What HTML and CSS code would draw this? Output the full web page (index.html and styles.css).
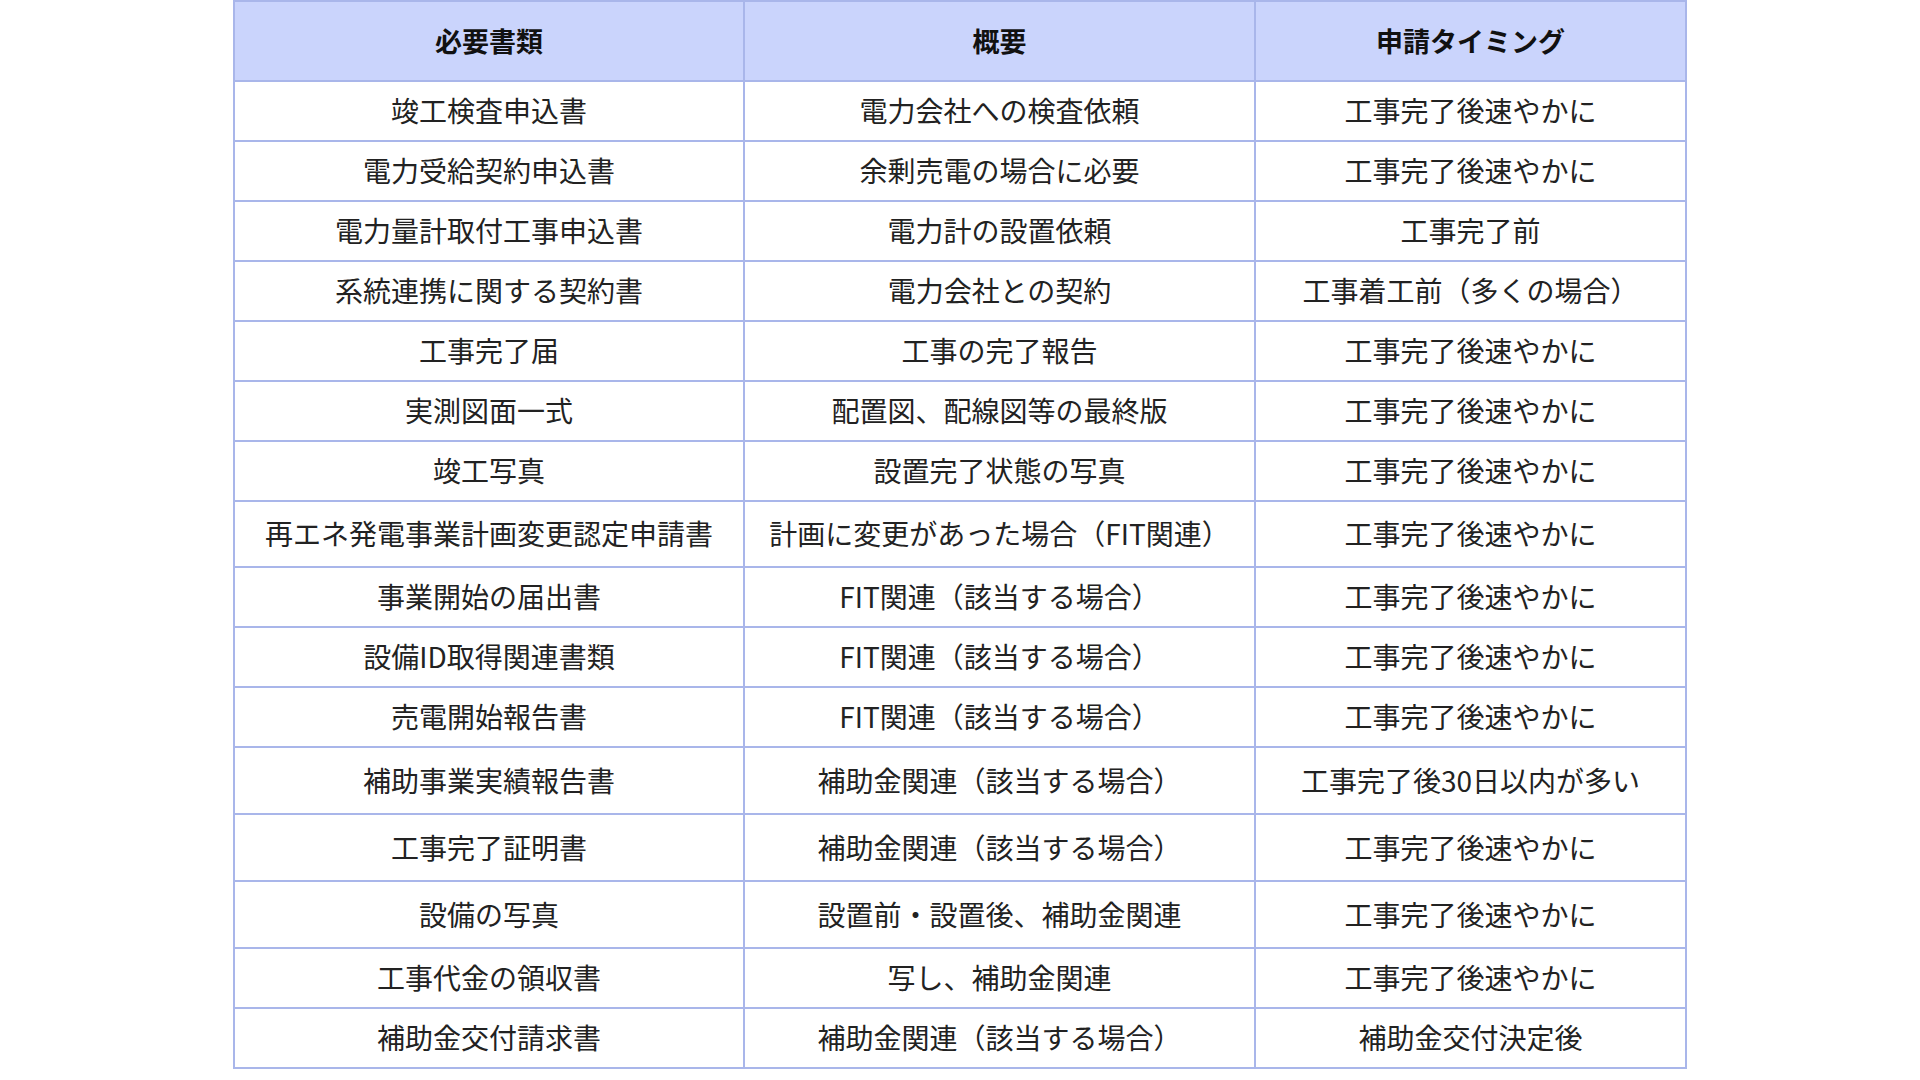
FILE: index.html
```html
<!DOCTYPE html>
<html lang="ja">
<head>
<meta charset="utf-8">
<title>必要書類一覧</title>
<link rel="stylesheet" href="styles.css">
</head>
<body>
<table class="docs">
  <colgroup>
    <col class="c1"><col class="c2"><col class="c3">
  </colgroup>
  <thead>
    <tr class="head"><th>必要書類</th><th>概要</th><th>申請タイミング</th></tr>
  </thead>
  <tbody>
    <tr><td>竣工検査申込書</td><td>電力会社への検査依頼</td><td>工事完了後速やかに</td></tr>
    <tr><td>電力受給契約申込書</td><td>余剰売電の場合に必要</td><td>工事完了後速やかに</td></tr>
    <tr><td>電力量計取付工事申込書</td><td>電力計の設置依頼</td><td>工事完了前</td></tr>
    <tr><td>系統連携に関する契約書</td><td>電力会社との契約</td><td>工事着工前（多くの場合）</td></tr>
    <tr><td>工事完了届</td><td>工事の完了報告</td><td>工事完了後速やかに</td></tr>
    <tr><td>実測図面一式</td><td>配置図、配線図等の最終版</td><td>工事完了後速やかに</td></tr>
    <tr><td>竣工写真</td><td>設置完了状態の写真</td><td>工事完了後速やかに</td></tr>
    <tr class="tall"><td>再エネ発電事業計画変更認定申請書</td><td>計画に変更があった場合（FIT関連）</td><td>工事完了後速やかに</td></tr>
    <tr><td>事業開始の届出書</td><td>FIT関連（該当する場合）</td><td>工事完了後速やかに</td></tr>
    <tr><td>設備ID取得関連書類</td><td>FIT関連（該当する場合）</td><td>工事完了後速やかに</td></tr>
    <tr><td>売電開始報告書</td><td>FIT関連（該当する場合）</td><td>工事完了後速やかに</td></tr>
    <tr class="taller"><td>補助事業実績報告書</td><td>補助金関連（該当する場合）</td><td>工事完了後30日以内が多い</td></tr>
    <tr class="taller"><td>工事完了証明書</td><td>補助金関連（該当する場合）</td><td>工事完了後速やかに</td></tr>
    <tr class="taller"><td>設備の写真</td><td>設置前・設置後、補助金関連</td><td>工事完了後速やかに</td></tr>
    <tr><td>工事代金の領収書</td><td>写し、補助金関連</td><td>工事完了後速やかに</td></tr>
    <tr><td>補助金交付請求書</td><td>補助金関連（該当する場合）</td><td>補助金交付決定後</td></tr>
  </tbody>
</table>
</body>
</html>
```

FILE: styles.css
```css
html, body {
  margin: 0;
  padding: 0;
  background: #ffffff;
}

body {
  font-family: "Noto Sans CJK JP", "Noto Sans", sans-serif;
  color: #222222;
}

.docs {
  margin: 0 auto;
  border-collapse: collapse;
  table-layout: fixed;
  width: 1452px;
}

.c1 { width: 510px; }
.c2 { width: 511px; }
.c3 { width: 431px; }

.docs th,
.docs td {
  border: 2px solid #a9b6ea;
  padding: 0 0 2px;
  text-align: center;
  vertical-align: middle;
  font-size: 28px;
  line-height: 1;
  white-space: nowrap;
}

.docs th {
  background: #cad4fc;
  font-weight: 700;
  color: #111111;
  font-size: 27px;
}

.docs tr.head {
  height: 80px;
}

.docs tbody tr {
  height: 60px;
}

.docs tbody tr.tall {
  height: 66px;
}

.docs tbody tr.taller {
  height: 67px;
}
```
